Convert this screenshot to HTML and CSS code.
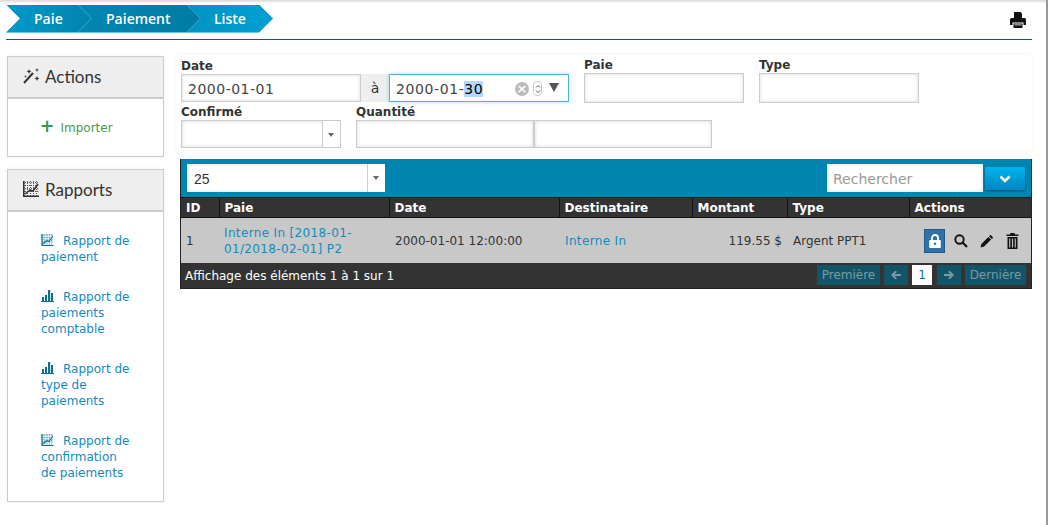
FILE: index.html
```html
<!DOCTYPE html>
<html lang="fr">
<head>
  <meta charset="UTF-8">
  <title>Paiement - Liste</title>
  <link rel="stylesheet" href="styles.css">
</head>
<body>
  <!-- Breadcrumb -->
  <header class="topbar">
    <nav class="crumbs">
      <a class="crumb crumb-first">Paie</a>
      <a class="crumb crumb-second">Paiement</a>
      <a class="crumb crumb-third">Liste</a>
    </nav>
    <svg class="print-icon" width="16" height="16" viewBox="0 0 16 16">
      <path fill="#111" d="M4 0h6.500L12 1.500V6H4z"/>
      <path fill="#111" d="M1.500 6h13A1.500 1.500 0 0 1 16 7.500V13h-2.500v-2.500h-11V13H0V7.500A1.500 1.500 0 0 1 1.500 6z"/>
      <path fill="#111" d="M3.500 11.500h9V16h-9z"/>
      <path fill="#fff" d="M4.500 12.500h7v.8h-7z"/>
    </svg>
  </header>

  <div class="layout">
    <!-- Sidebar -->
    <aside class="sidebar">
      <section class="card">
        <h2 class="card-title">
          <svg class="title-icon" width="18" height="16" viewBox="0 0 18 16">
            <path fill="none" stroke="#333" stroke-width="2" d="M1 15 10 5"/>
            <path fill="#333" d="M6 1l.7 1.800L8.500 3.500l-1.800.7L6 6l-.7-1.800L3.500 3.500l1.800-.7zM14 0l.6 1.400L16 2l-1.400.6L14 4l-.6-1.400L12 2l1.400-.6zM14 8l.8 1.700 1.700.8-1.700.8L14 13l-.8-1.700-1.700-.8 1.700-.8zM2.500 7l.4 1 1 .4-1 .4-.4 1-.4-1-1-.4 1-.4z"/>
          </svg>
          Actions
        </h2>
        <div class="card-body card-body-action">
          <a class="action-link"><span class="plus">+</span>Importer</a>
        </div>
      </section>

      <section class="card">
        <h2 class="card-title">
          <svg class="title-icon title-icon-chart" width="16" height="16" viewBox="0 0 16 16">
            <path fill="none" stroke="#333" stroke-width=".8" stroke-dasharray="1 1" d="M0 1.500h16M0 4.500h16M0 7.500h16M0 10.500h16M1.500 0v16M4.500 0v16M7.500 0v16M10.500 0v16M13.500 0v16"/>
            <path fill="none" stroke="#333" stroke-width="1.500" d="M.7 0v15.300H16M2 13l5-4 3 1 5-7"/>
          </svg>
          Rapports
        </h2>
        <ul class="card-body report-list">
          <li>
            <a>
              <svg class="report-icon" width="13" height="12" viewBox="0 0 16 16">
                <path fill="none" stroke="#0f6f91" stroke-width=".9" stroke-dasharray="1 1" d="M0 1.500h16M0 4.500h16M0 7.500h16M0 10.500h16M1.500 0v16M4.500 0v16M7.500 0v16M10.500 0v16M13.500 0v16"/>
                <path fill="none" stroke="#0f6f91" stroke-width="1.600" d="M.7 0v15.300H16M2 13l5-4 3 1 5-7"/>
              </svg>Rapport de paiement
            </a>
          </li>
          <li>
            <a>
              <svg class="report-icon" width="13" height="12" viewBox="0 0 13 12">
                <path fill="#0f6f91" d="M0 11h13v1H0zM1 7h2v4H1zM4 5h2v6H4zM7 0h2.200v11H7zM10 3h2v8h-2z"/>
              </svg>Rapport de paiements comptable
            </a>
          </li>
          <li>
            <a>
              <svg class="report-icon" width="13" height="12" viewBox="0 0 13 12">
                <path fill="#0f6f91" d="M0 11h13v1H0zM1 7h2v4H1zM4 5h2v6H4zM7 0h2.200v11H7zM10 3h2v8h-2z"/>
              </svg>Rapport de type de paiements
            </a>
          </li>
          <li>
            <a>
              <svg class="report-icon" width="13" height="12" viewBox="0 0 16 16">
                <path fill="none" stroke="#0f6f91" stroke-width=".9" stroke-dasharray="1 1" d="M0 1.500h16M0 4.500h16M0 7.500h16M0 10.500h16M1.500 0v16M4.500 0v16M7.500 0v16M10.500 0v16M13.500 0v16"/>
                <path fill="none" stroke="#0f6f91" stroke-width="1.600" d="M.7 0v15.300H16M2 13l5-4 3 1 5-7"/>
              </svg>Rapport de confirmation de paiements
            </a>
          </li>
        </ul>
      </section>
    </aside>

    <main class="content">
      <!-- Filters -->
      <form class="filters">
        <div class="filter-row">
          <div class="field">
            <label>Date</label>
            <div class="date-range">
              <input class="input input-date" type="text" value="2000-01-01">
              <span class="range-sep">à</span>
              <div class="date-focus">
                <span class="date-text">2000-01-<span class="date-selected">30</span></span>
                <span class="clear-btn">&#215;</span>
                <span class="spin-btn">
                  <svg width="6" height="12" viewBox="0 0 6 12"><path fill="none" stroke="#555" d="M1 4.500l2-2 2 2M1 7.500l2 2 2-2"/></svg>
                </span>
                <span class="drop-btn"></span>
              </div>
            </div>
          </div>
          <div class="field field-offset">
            <label>Paie</label>
            <input class="input input-tall" type="text">
          </div>
          <div class="field field-offset">
            <label>Type</label>
            <input class="input input-tall" type="text">
          </div>
        </div>
        <div class="filter-row">
          <div class="field">
            <label>Confirmé</label>
            <div class="select select-small"><span></span><i class="select-arrow"></i></div>
          </div>
          <div class="field">
            <label>Quantité</label>
            <div class="qty-range">
              <input class="input input-qty" type="text">
              <input class="input input-qty" type="text">
            </div>
          </div>
        </div>
      </form>

      <!-- Table -->
      <section class="grid-panel">
        <div class="grid-toolbar">
          <div class="select select-page"><span>25</span><i class="select-arrow"></i></div>
          <div class="grid-search">
            <input class="input search-input" type="text" placeholder="Rechercher">
            <button class="search-btn" type="button">
              <svg width="12" height="8" viewBox="0 0 12 8"><path fill="none" stroke="#fff" stroke-width="2.600" d="M1.500 1.500 6 6l4.500-4.500"/></svg>
            </button>
          </div>
        </div>
        <table class="grid">
          <thead>
            <tr>
              <th class="col-id">ID</th>
              <th class="col-paie">Paie</th>
              <th class="col-date">Date</th>
              <th class="col-dest">Destinataire</th>
              <th class="col-amount">Montant</th>
              <th class="col-type">Type</th>
              <th>Actions</th>
            </tr>
          </thead>
          <tbody>
            <tr>
              <td>1</td>
              <td class="cell-paie"><a>Interne In [2018-01-01/2018-02-01] P2</a></td>
              <td>2000-01-01 12:00:00</td>
              <td><a>Interne In</a></td>
              <td class="amount">119.55 $</td>
              <td>Argent PPT1</td>
              <td>
                <div class="row-actions">
                  <span class="lock-btn">
                    <svg width="12" height="14" viewBox="0 0 12 14">
                      <path fill="none" stroke="#fff" stroke-width="1.800" d="M3 6.500V4a3 3 0 0 1 6 0v2.500"/>
                      <path fill="#fff" fill-rule="evenodd" d="M1 6h10a.8.8 0 0 1 .8.8v6.400a.8.8 0 0 1-.8.8H1a.8.8 0 0 1-.8-.8V6.800A.8.8 0 0 1 1 6zm5 2.500a1.300 1.300 0 1 0 0 2.600 1.300 1.300 0 0 0 0-2.600z"/>
                    </svg>
                  </span>
                  <svg class="act-search" width="14" height="14" viewBox="0 0 14 14">
                    <circle cx="5.500" cy="5.500" r="4.200" fill="none" stroke="#111" stroke-width="1.900"/>
                    <path stroke="#111" stroke-width="2.200" d="M8.800 8.800 13 13"/>
                  </svg>
                  <svg class="act-edit" width="14" height="14" viewBox="0 0 14 14">
                    <path fill="#111" d="M10.500.8l2.700 2.700-1.400 1.400-2.700-2.700zM8.400 2.900l2.700 2.700-7 7L.5 13.500l.9-3.600z"/>
                  </svg>
                  <svg class="act-trash" width="13" height="16" viewBox="0 0 13 16">
                    <path fill="#111" d="M4.500 0h4l.5 1.500h3.500V3H.5V1.500H4zM1.500 4h10v12h-10z"/>
                    <path fill="#c8c8c8" d="M3.200 5.500h1.100v9H3.200zM5.950 5.500h1.100v9h-1.100zM8.700 5.500h1.100v9H8.700z"/>
                  </svg>
                </div>
              </td>
            </tr>
          </tbody>
        </table>
        <div class="grid-footer">
          <span class="grid-info">Affichage des éléments 1 à 1 sur 1</span>
          <div class="pager">
            <a class="page-btn page-text">Première</a>
            <a class="page-btn page-arrow">
              <svg width="10" height="8" viewBox="0 0 10 8"><path fill="#7b9aa5" d="M4 0h1.500v1.500L3.500 3H10v2H3.500l2 1.500V8H4L0 4z"/></svg>
            </a>
            <a class="page-btn page-current">1</a>
            <a class="page-btn page-arrow">
              <svg width="10" height="8" viewBox="0 0 10 8"><path fill="#7b9aa5" d="M6 0H4.500v1.500L6.500 3H0v2h6.500l-2 1.500V8H6l4-4z"/></svg>
            </a>
            <a class="page-btn page-text page-last">Dernière</a>
          </div>
        </div>
      </section>
    </main>
  </div>
</body>
</html>
```

FILE: styles.css
```css
/* Global */
* {
  margin: 0;
  padding: 0;
  box-sizing: border-box;
}

body {
  font-family: "DejaVu Sans", sans-serif;
  font-size: 12px;
  color: #333;
  background-color: #fff;
  padding: 5px 14px 0 6px;
  border-right: 2px solid #999;
  box-shadow: inset 0 3px 2px -1px #ddd;
  height: 525px;
  overflow: hidden;
}

a {
  color: #0f8cc0;
}

/* Top bar */
.topbar {
  display: flex;
  justify-content: space-between;
  align-items: center;
  height: 35px;
  padding-bottom: 7px;
  border-bottom: 1px solid #0b5a78;
}

.crumbs {
  display: flex;
  background-color: #3fa6c8;
  clip-path: polygon(0 0, calc(100% - 14px) 0, 100% 50%, calc(100% - 14px) 100%, 0 100%, 14px 50%);
}

.crumb {
  display: flex;
  align-items: center;
  height: 28px;
  padding-left: 28px;
  font-family: "Open Sans", sans-serif;
  font-size: 14px;
  font-weight: 600;
  color: #fff;
  clip-path: polygon(0 0, calc(100% - 14px) 0, 100% 50%, calc(100% - 14px) 100%, 0 100%, 14px 50%);
}

.crumb + .crumb {
  margin-left: -13px;
}

.crumb-first {
  width: 85px;
  background: linear-gradient(to right, #009ac9, #0083ad);
}

.crumb-second {
  width: 122px;
  background: linear-gradient(to right, #0088b2, #007ba5);
}

.crumb-third {
  width: 86px;
  padding-left: 27px;
  background: linear-gradient(to right, #0093c2, #00a0d2);
}

.print-icon {
  margin-right: 6px;
  margin-top: 2px;
}

/* Layout */
.layout {
  display: flex;
  padding-top: 15px;
}

.sidebar {
  width: 170px;
  padding: 1px 12px 0 1px;
  flex-shrink: 0;
}

.card {
  border: 1px solid #ccc;
  margin-bottom: 12px;
  box-shadow: 0 0 4px rgba(0, 0, 0, 0.05);
}

.card-title {
  display: flex;
  align-items: center;
  gap: 4px;
  height: 42px;
  padding: 0 0 2px 15px;
  font-family: "Lato", sans-serif;
  font-size: 17px;
  font-weight: 400;
  color: #333;
  background-color: #eee;
  border-bottom: 2px solid #ccc;
}

.title-icon {
  flex-shrink: 0;
}

.title-icon-chart {
  margin-right: 2px;
}

.card-body-action {
  display: flex;
  justify-content: center;
  padding: 20px 0 22px;
  height: 57px;
}

.action-link {
  color: #4a9a4a;
  margin-right: 19px;
}

.plus {
  font-size: 18px;
  line-height: 14px;
  font-weight: bold;
  color: #3a9a55;
  margin-right: 6px;
}

.report-list {
  list-style: none;
  padding: 21px 31px 0 33px;
}

.report-list li {
  line-height: 16px;
  margin-bottom: 24px;
}

.report-list li:last-child {
  margin-bottom: 20px;
}

.report-icon {
  margin-right: 9px;
  vertical-align: -1px;
}

/* Filters */
.content {
  flex: 1;
}

.filters {
  height: 95px;
  padding: 4px 0 0 5px;
  box-shadow: 0 0 4px rgba(0, 0, 0, 0.06);
}

.filter-row {
  display: flex;
  gap: 15px;
}

.field label {
  display: block;
  font-weight: bold;
  line-height: 15px;
}

.filter-row + .filter-row {
  margin-top: 2px;
}

.field-offset {
  margin-top: -1px;
}

.input {
  display: block;
  height: 28px;
  border: 1px solid #ccc;
  font-family: inherit;
  font-size: 14px;
  color: #444;
  letter-spacing: 0.5px;
  padding: 1px 6px 0;
  box-shadow: inset 0 0 4px rgba(0, 0, 0, 0.14);
  outline: none;
}

.input-tall {
  width: 160px;
  height: 30px;
}

.date-range {
  display: flex;
}

.input-date {
  width: 180px;
}

.range-sep {
  display: flex;
  justify-content: center;
  align-items: center;
  width: 28px;
  height: 28px;
  font-size: 14px;
  background-color: #eee;
}

.date-focus {
  display: flex;
  align-items: center;
  width: 180px;
  height: 28px;
  padding: 1px 6px 0;
  border: 1px solid #4fb6d8;
  box-shadow: 0 0 4px rgba(80, 180, 220, 0.5);
  font-size: 14px;
  letter-spacing: 0.6px;
  color: #444;
}

.date-text {
  flex: 1;
}

.date-selected {
  color: #000;
  background-color: #b3d7ff;
}

.clear-btn {
  display: flex;
  justify-content: center;
  align-items: center;
  width: 14px;
  height: 14px;
  margin-right: 1px;
  border-radius: 50%;
  background-color: #bbb;
  color: #fff;
  font-size: 13px;
  font-weight: bold;
  line-height: 1;
  letter-spacing: 0;
}

.spin-btn {
  display: flex;
  align-items: center;
  justify-content: center;
  width: 9px;
  height: 15px;
  margin: 0 7px 0 3px;
  border: 1px solid #ccc;
  border-radius: 4px;
}

.drop-btn {
  width: 0;
  height: 0;
  margin: 0 3px 2px 0;
  border-left: 5px solid transparent;
  border-right: 5px solid transparent;
  border-top: 9px solid #555;
}

.select {
  display: flex;
  height: 28px;
  background-color: #fff;
  border: 1px solid #ccc;
  box-shadow: inset 0 0 4px rgba(0, 0, 0, 0.14);
}

.select span {
  flex: 1;
  align-self: center;
  padding: 2px 0 0 7px;
  font-size: 14px;
  font-family: "Liberation Sans", sans-serif;
}

.select-arrow {
  position: relative;
  width: 18px;
  border-left: 1px solid #ccc;
  background-color: #fff;
}

.select-arrow::after {
  content: "";
  position: absolute;
  top: 12px;
  left: 5px;
  border-left: 3.500px solid transparent;
  border-right: 3.500px solid transparent;
  border-top: 4px solid #666;
}

.select-small {
  width: 160px;
}

.qty-range {
  display: flex;
}

.input-qty {
  width: 178px;
}

/* Grid */
.grid-panel {
  margin: 9px 0 0 4px;
  border: 1px solid #222;
  border-top: 0;
  color: #333;
}

.grid-toolbar {
  display: flex;
  justify-content: space-between;
  height: 38px;
  padding: 5px 6px 0;
  background-color: #0085b0;
}

.select-page {
  width: 198px;
  border: 0;
}

.grid-search {
  display: flex;
  gap: 2px;
}

.search-input {
  width: 156px;
  border: 0;
  padding-top: 2px;
  font-size: 14px;
  letter-spacing: 0;
}

.search-input::placeholder {
  color: #999;
}

.search-btn {
  display: flex;
  justify-content: center;
  align-items: center;
  width: 40px;
  height: 23px;
  margin-top: 3px;
  border: 0;
  background: linear-gradient(to bottom, #00b4ee, #0085c0);
  box-shadow: 0 1px 2px rgba(0, 0, 0, 0.4);
}

.grid {
  width: 100%;
  table-layout: fixed;
  border-collapse: collapse;
}

.grid th {
  height: 20px;
  padding: 0 5px;
  text-align: left;
  color: #fff;
  background-color: #333;
  border-left: 1px solid #111;
  border-top: 1px solid #111;
  border-bottom: 1px solid #111;
}

.grid th:first-child {
  border-left: 0;
}

.col-id {
  width: 38px;
}

.col-paie,
.col-date {
  width: 170px;
}

.col-dest {
  width: 133px;
}

.col-amount {
  width: 95px;
}

.col-type {
  width: 122px;
}

.grid td {
  height: 45px;
  padding: 1px 5px 0 6px;
  line-height: 16px;
  background-color: #c8c8c8;
}

.grid td:first-child,
.grid td.cell-paie {
  padding-left: 5px;
}

.grid td a {
  letter-spacing: 0.35px;
}

.amount {
  text-align: right;
}

.row-actions {
  display: flex;
  align-items: center;
  padding-left: 9px;
}

.lock-btn {
  display: flex;
  justify-content: center;
  align-items: center;
  width: 21px;
  height: 24px;
  background-color: #2f72a8;
  border: 1px solid #1f5a8a;
}

.act-search {
  margin-left: 9px;
}

.act-edit {
  margin-left: 12px;
}

.act-trash {
  margin-left: 12px;
}

.grid-footer {
  display: flex;
  justify-content: space-between;
  align-items: center;
  height: 25px;
  padding: 0 5px 0 4px;
  color: #fff;
  background-color: #333;
}

.grid-info {
  padding-top: 2px;
}

.pager {
  display: flex;
  gap: 4px;
}

.page-btn {
  display: flex;
  justify-content: center;
  align-items: center;
  height: 20px;
  background-color: #125468;
  color: #7b9aa5;
}

.page-text {
  width: 63px;
}

.page-last {
  width: 61px;
}

.page-arrow {
  width: 24px;
}

.page-current {
  width: 20px;
  margin-right: 1px;
  background-color: #fff;
  color: #0f6f91;
}
```
